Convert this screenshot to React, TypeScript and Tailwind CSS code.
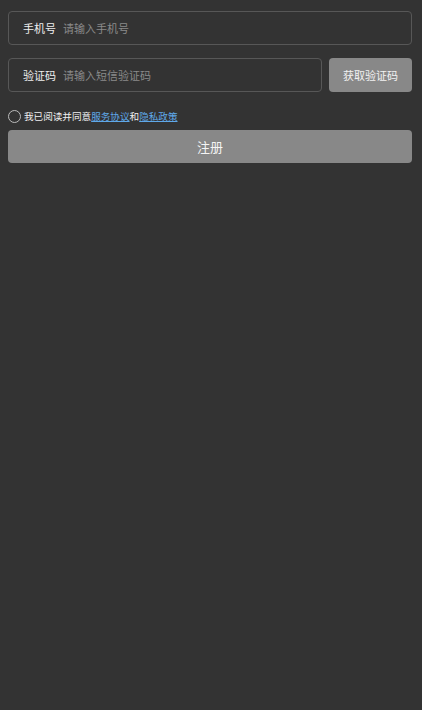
import React from "react";

export default function App() {
  return (
    <div
      className="min-h-[710px] w-full bg-[#333333] pl-2 pr-[10px] pt-[11px]"
      style={{ fontFamily: '"Noto Sans CJK SC", "Noto Sans", sans-serif' }}
    >
      <div className="flex h-[34px] items-center rounded-[4px] border border-[#575757] pl-[14px]">
        <span className="text-[11px] text-[#eeeeee]">手机号</span>
        <span className="ml-[7px] text-[11px] text-[#8a8a8a]">请输入手机号</span>
      </div>
      <div className="mt-[13px] flex gap-[7px]">
        <div className="flex h-[34px] flex-1 items-center rounded-[4px] border border-[#575757] pl-[14px]">
          <span className="text-[11px] text-[#eeeeee]">验证码</span>
          <span className="ml-[7px] text-[11px] text-[#8a8a8a]">请输入短信验证码</span>
        </div>
        <div className="flex h-[34px] w-[83px] items-center justify-center rounded-[4px] bg-[#888888] text-[11px] text-[#f2f2f2]">
          获取验证码
        </div>
      </div>
      <div className="mt-[17px] flex items-center">
        <div className="h-[13px] w-[13px] rounded-full border border-[#bbbbbb]" />
        <span className="ml-[3px] text-[9.6px] text-[#f0f0f0]">
          我已阅读并同意
          <span className="text-[#5fa8e8] underline">服务协议</span>和
          <span className="text-[#5fa8e8] underline">隐私政策</span>
        </span>
      </div>
      <div className="mt-[7px] flex h-[33px] items-center justify-center rounded-[4px] bg-[#888888] text-[13px] text-[#f5f5f5]">
        注册
      </div>
    </div>
  );
}
